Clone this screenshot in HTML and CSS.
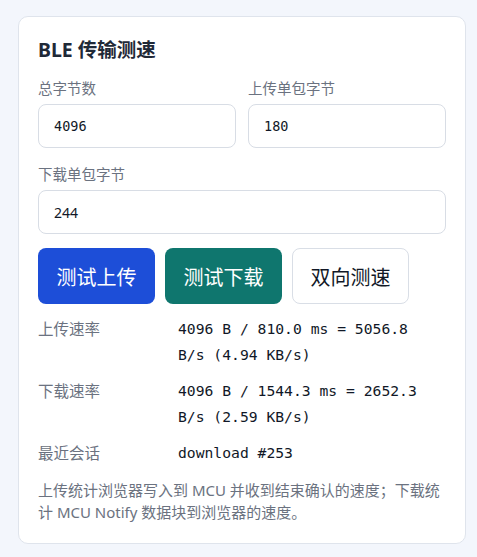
FILE: index.html
```html
<!DOCTYPE html>
<html lang="zh-CN">
<head>
  <meta charset="UTF-8" />
  <meta name="viewport" content="width=device-width, initial-scale=1.0"/>
  <title>BLE 传输测速</title>
  <link rel="stylesheet" href="styles.css">
</head>
<body>
  <div class="card">
    <h2>BLE 传输测速</h2>

    <div class="fields">
      <label class="field">
        <span>总字节数</span>
        <input type="text" class="mono" value="4096" />
      </label>
      <label class="field">
        <span>上传单包字节</span>
        <input type="text" class="mono" value="180" />
      </label>
      <label class="field wide">
        <span>下载单包字节</span>
        <input type="number" value="244" />
      </label>
    </div>

    <div class="actions">
      <button class="btn upload">测试上传</button>
      <button class="btn download">测试下载</button>
      <button class="btn both">双向测速</button>
    </div>

    <div class="stats">
      <div class="stat-label">上传速率</div>
      <div class="stat-value">4096 B / 810.0 ms = 5056.8 B/s (4.94 KB/s)</div>
      <div class="stat-label">下载速率</div>
      <div class="stat-value">4096 B / 1544.3 ms = 2652.3 B/s (2.59 KB/s)</div>
      <div class="stat-label">最近会话</div>
      <div class="stat-value">download #253</div>
    </div>

    <p class="note">上传统计浏览器写入到 MCU 并收到结束确认的速度；下载统计 MCU Notify 数据块到浏览器的速度。</p>
  </div>
</body>
</html>
```

FILE: styles.css
```css
* { box-sizing: border-box; }

body {
  margin: 0;
  padding: 16px 0 0 18px;
  background: #f3f6fc;
  font-family: 'Noto Sans', 'Noto Sans CJK SC', sans-serif;
  color: #1f2937;
}

.card {
  width: 448px;
  height: 528px;
  background: #fff;
  border: 1px solid #dfe4ec;
  border-radius: 10px;
  padding: 19px 19px;
}

.card h2 {
  margin: 0 0 14px;
  font-size: 19.5px;
  line-height: 28px;
  font-weight: 700;
  color: #1f2937;
}

.fields {
  display: grid;
  grid-template-columns: 1fr 1fr;
  column-gap: 12px;
  row-gap: 16px;
}

.field {
  display: flex;
  flex-direction: column;
  gap: 6px;
}

.field.wide {
  grid-column: 1 / -1;
}

.field span {
  font-size: 14.5px;
  line-height: 20px;
  color: #6b7280;
}

.field input {
  height: 44px;
  width: 100%;
  border: 1px solid #d8dde5;
  border-radius: 8px;
  padding: 0 15px;
  font-family: 'Noto Sans', 'Noto Sans CJK SC', sans-serif;
  font-size: 14px;
  color: #111827;
  background: #fff;
  outline: none;
}

.field input.mono {
  font-family: 'DejaVu Sans Mono', monospace;
  font-size: 13.5px;
}

.field input[type="number"] {
  -moz-appearance: textfield;
}

.field input::-webkit-inner-spin-button {
  -webkit-appearance: none;
}

.actions {
  display: flex;
  gap: 10px;
  margin-top: 14px;
}

.btn {
  width: 117px;
  height: 56px;
  border-radius: 8px;
  border: 1px solid transparent;
  font-family: 'Noto Sans', 'Noto Sans CJK SC', sans-serif;
  font-size: 20px;
  cursor: pointer;
}

.btn.upload {
  background: #1d4ed8;
  color: #fff;
}

.btn.download {
  background: #0f766e;
  color: #fff;
}

.btn.both {
  background: #fff;
  color: #111827;
  border-color: #d9dee6;
}

.stats {
  display: grid;
  grid-template-columns: 140px 1fr;
  row-gap: 10px;
  margin-top: 12px;
  padding-right: 12px;
}

.stat-label {
  font-size: 15.5px;
  line-height: 26px;
  color: #6b7280;
}

.stat-value {
  font-family: 'DejaVu Sans Mono', monospace;
  font-size: 14.7px;
  line-height: 26px;
  color: #111827;
}

.note {
  margin: 13px 0 0;
  font-size: 15px;
  line-height: 22px;
  color: #6b7280;
}
```
